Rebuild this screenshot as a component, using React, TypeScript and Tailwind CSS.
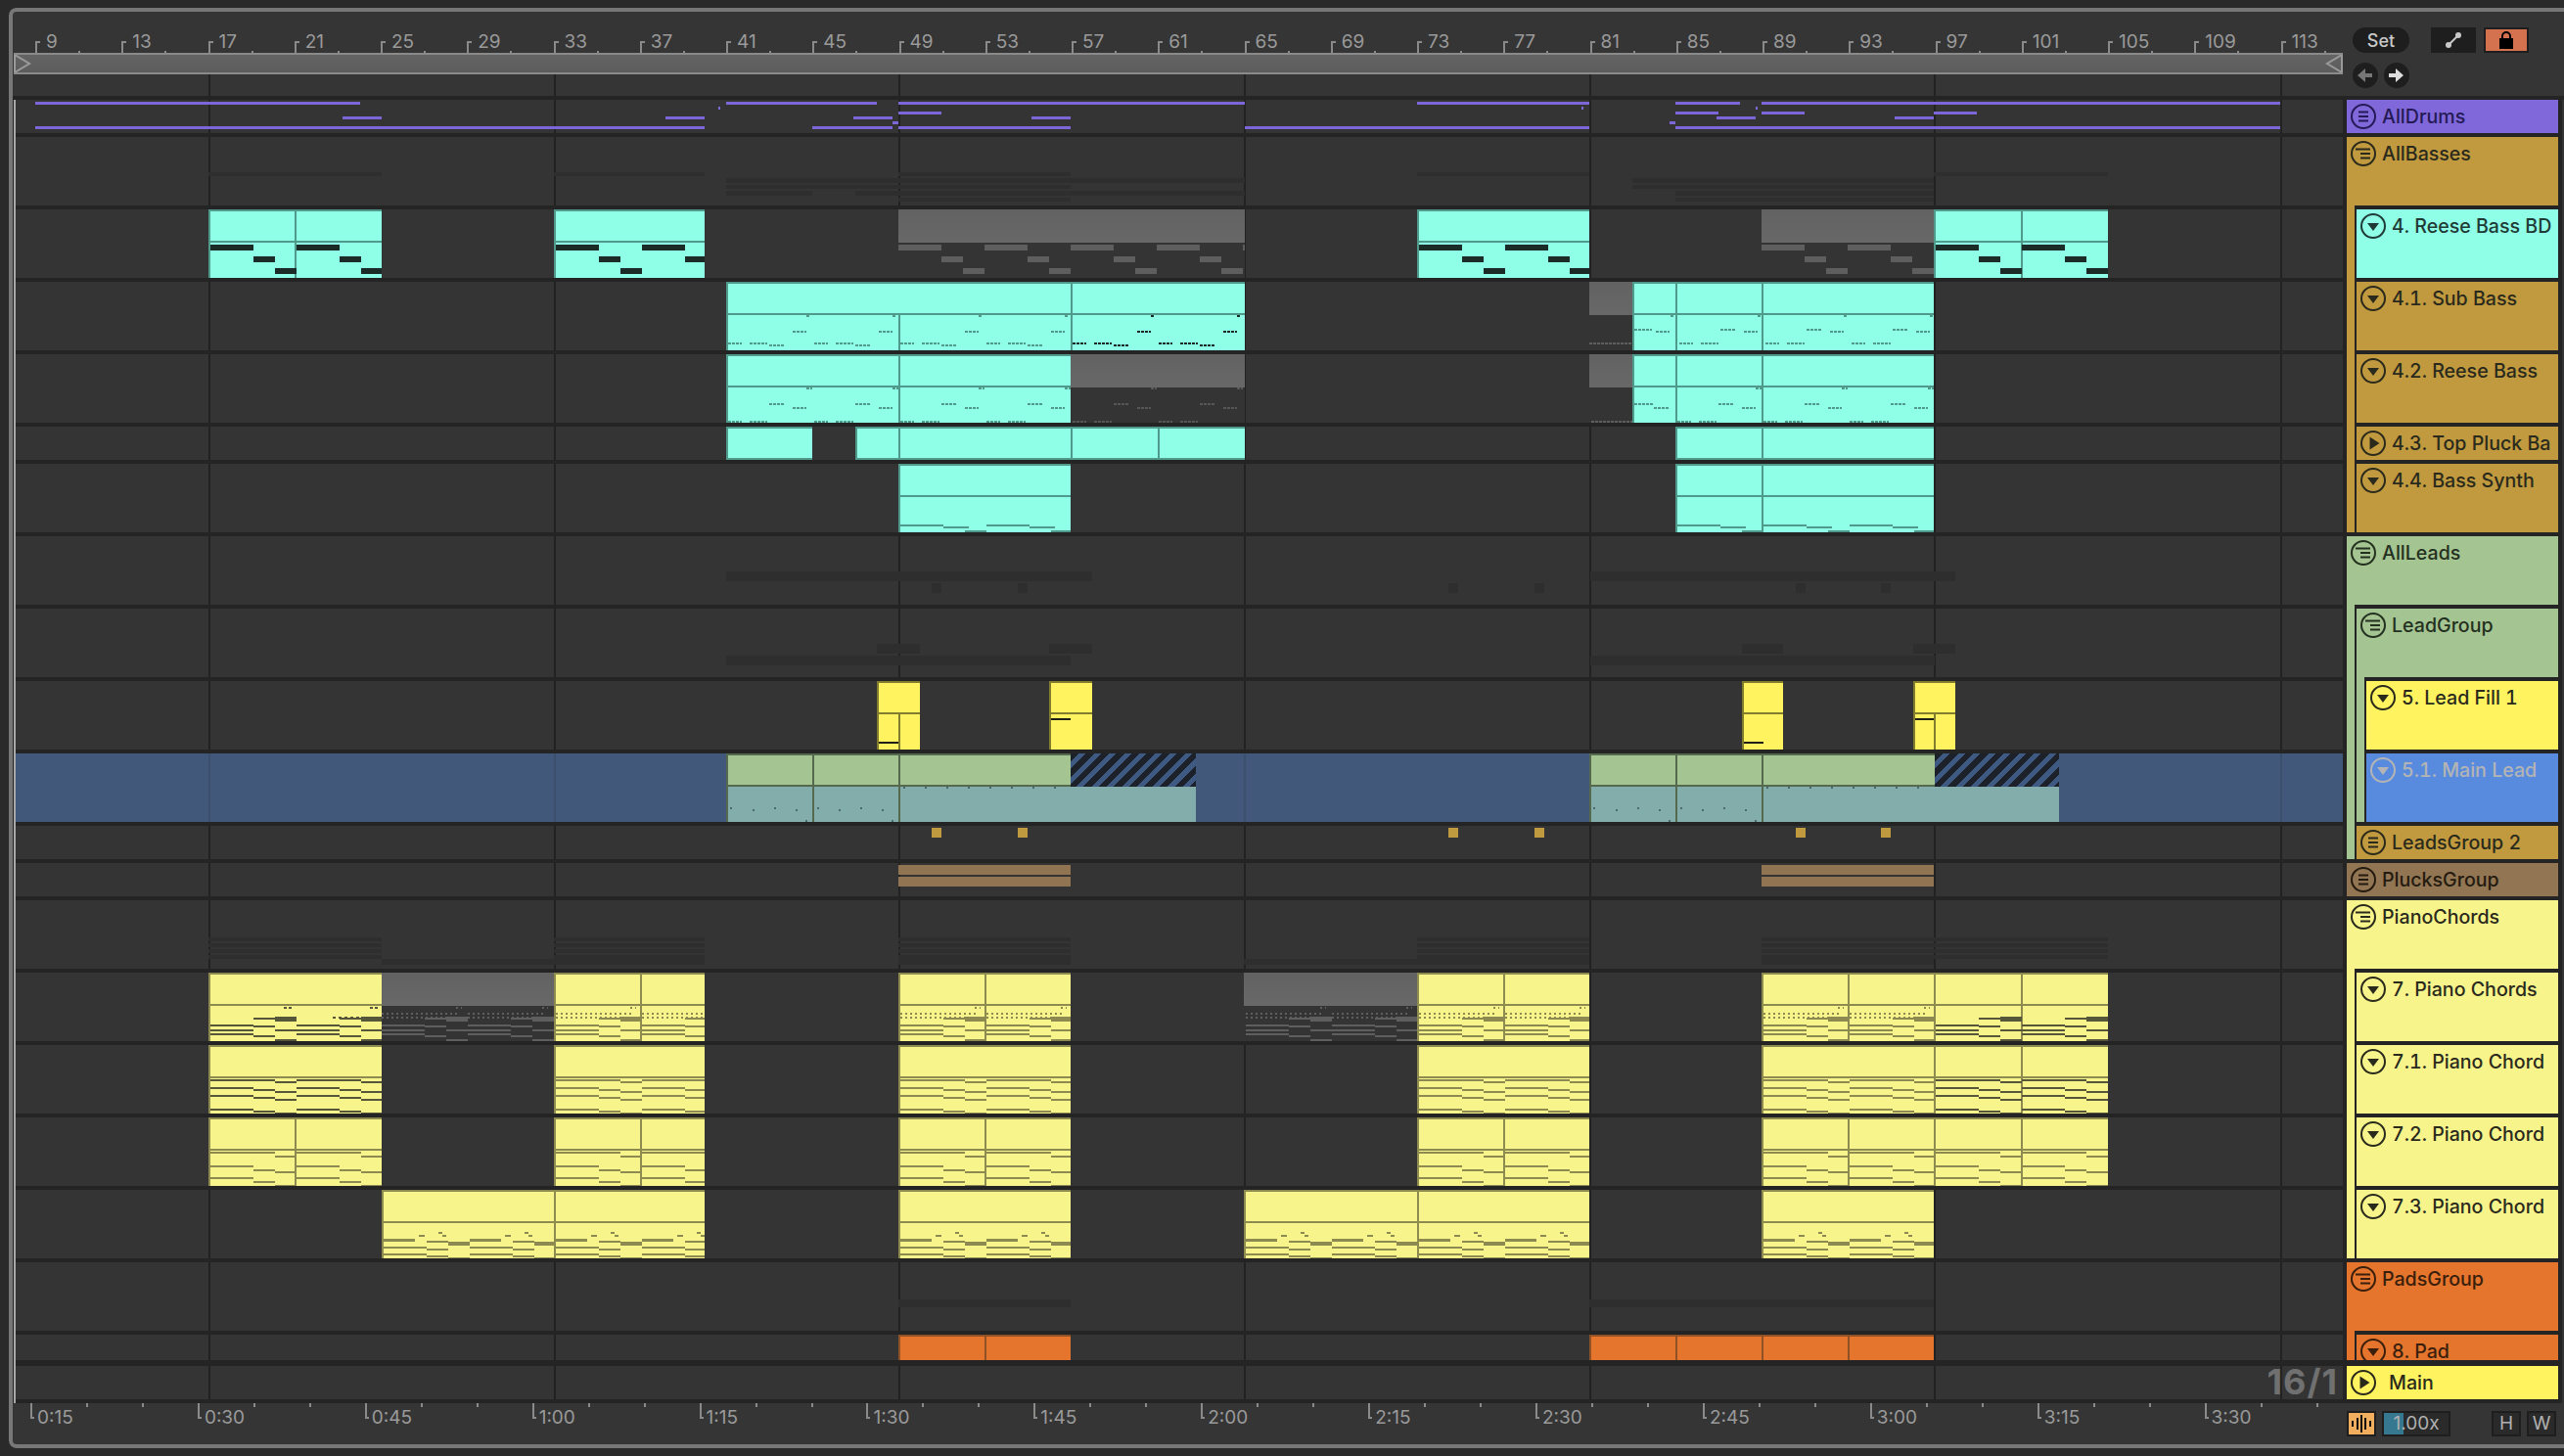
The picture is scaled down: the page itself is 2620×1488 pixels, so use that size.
import React from "react";

type N = { a: number; b: number; y: number; h: number; c: string; dash?: string };
type ClipT = { a: number; b: number; t: string; gray?: boolean; head?: string };
type LaneT = { top: number; h: number; clips?: ClipT[]; notes?: N[]; sel?: boolean; hatch?: [number, number][]; extra?: React.ReactNode };

const LX = 16;
const GRID = [213, 566, 918, 1271, 1624, 1976, 2330];

const R = (a: number, b: number, y: number, h: number, c: string, dash?: string): N => ({ a, b, y, h, c, dash });
const rep = (x0: number, x1: number, items: number[][], c: string, dash?: string, period = 88): N[] => {
  const out: N[] = [];
  for (let p = x0; p < x1; p += period) {
    for (const it of items) {
      const s = p + it[0];
      if (s < x1) out.push(R(s, Math.min(p + it[1], x1), it[2], it[3] ?? 2, c, dash));
    }
  }
  return out;
};

const CY = "cyan", YL = "yellow", BY = "bright", OR = "orange", LD = "lead";
const themes: Record<string, string> = {
  cyan: "bg-[#8fffe8] border-[#4f9a8b]",
  yellow: "bg-[#f8f48c] border-[#8e8b50]",
  bright: "bg-[#fff35f] border-[#827c2f]",
  orange: "bg-[#e5742d] border-[#8f5227]",
  lead: "bg-[#82adab] border-[#55694f]",
};
const c = (a: number, b: number, t: string): ClipT => ({ a, b, t });
const g = (a: number, b: number): ClipT => ({ a, b, t: "", gray: true });
const lead = (a: number, b: number): ClipT => ({ a, b, t: LD, head: "bg-[#a4c491]" });

const P = "#7d67d8";
const G = "#2e2e2e";
const CN = "#4f9a8b";
const CD = "#1a2b28";
const YN = "#8c8a50";
const YD = "#56563a";
const GN = "#5e5e5e";

const purple: N[] = [
  [36, 368, 104], [742, 896, 104], [918, 1272, 104], [1448, 1624, 104], [1712, 1778, 104], [1800, 2330, 104],
  [734, 736, 109], [1616, 1618, 109], [1794, 1796, 109],
  [918, 962, 114], [1712, 1756, 114], [1800, 1844, 114], [1976, 2020, 114],
  [350, 390, 119], [680, 720, 119], [872, 912, 119], [1054, 1094, 119], [1754, 1794, 119], [1936, 1976, 119],
  [912, 918, 124], [1706, 1712, 124],
  [36, 720, 129], [830, 912, 129], [918, 1094, 129], [1272, 1624, 129], [1712, 2330, 129],
].map(([a, b, y]) => R(a, b, y, 3, P));

const bassGhost: N[] = [
  [213, 390, 176, 4], [566, 720, 176, 4], [1448, 1624, 176, 4], [1976, 2154, 176, 4], [918, 1094, 176, 4],
  [742, 1272, 182, 5], [1668, 1976, 182, 5],
  [742, 1094, 189, 4], [1668, 1976, 189, 4],
  [742, 830, 195, 5], [874, 1272, 195, 5], [1712, 1976, 195, 5],
  [918, 1094, 202, 4], [1712, 1976, 202, 4],
].map(([a, b, y, h]) => R(a, b, y, h, G));

const reeseItems = [[0, 44, 250, 6], [44, 66, 262, 6], [66, 88, 274, 6]];
const sub1 = [[2, 16, 350], [24, 42, 350], [44, 60, 352], [68, 82, 338], [82, 86, 322]];
const sub2 = [[2, 16, 350], [24, 42, 350], [44, 60, 336], [68, 82, 338], [82, 86, 322]];
const sub3 = [[2, 16, 430], [24, 42, 430], [44, 60, 412], [68, 82, 416], [82, 88, 396]];
const syn = [[0, 44, 536], [44, 70, 538], [66, 88, 542, 3]];

const ch7 = [[0, 44, 1047], [0, 44, 1052], [0, 44, 1056], [44, 66, 1040], [44, 66, 1048], [44, 66, 1058], [66, 88, 1039, 5], [66, 88, 1052], [66, 88, 1062]];
const dots7 = [[0, 78, 1035], [0, 66, 1039], [76, 82, 1029]];
const ch71 = [[0, 44, 1103], [0, 44, 1111], [0, 44, 1119], [0, 44, 1133], [44, 66, 1103], [44, 66, 1113], [44, 66, 1121], [44, 66, 1135], [66, 88, 1105], [66, 88, 1115], [66, 88, 1123], [66, 88, 1137]];
const ch72 = [[0, 44, 1177], [0, 44, 1191], [0, 44, 1203], [44, 66, 1177], [44, 66, 1195], [44, 66, 1207], [66, 88, 1181], [66, 88, 1197], [66, 88, 1211]];
const ch73 = [[0, 32, 1266, 3], [0, 44, 1274], [0, 44, 1281], [44, 66, 1268], [44, 66, 1276], [44, 66, 1283], [66, 88, 1269, 4], [66, 88, 1285], [36, 42, 1262], [56, 60, 1259], [60, 64, 1262]];

const dotsLead = (o: number): N[] => [
  ...[[746, 825], [769, 827], [791, 825], [813, 827], [823, 838], [835, 825], [857, 827], [879, 825], [901, 827], [911, 838]].map(([x, y]) => R(x + o, x + o + 2, y, 2, "#4d6a6b")),
  ...[923, 945, 967, 989, 1011, 1033, 1055, 1077].map((x) => R(x + o, x + o + 2, 804, 2, "#4d6a6b")),
];

const ghostStripes = (a: number, b: number) => [958, 964, 970, 976].map((y) => R(a, b, y, 4, G));

const lanes: LaneT[] = [
  { top: 102, h: 34, notes: purple },
  { top: 140, h: 70, notes: bassGhost },
  {
    top: 214, h: 70,
    clips: [c(213, 301, CY), c(301, 390, CY), c(566, 720, CY), g(918, 1272), c(1448, 1624, CY), g(1800, 1976), c(1976, 2065, CY), c(2065, 2154, CY)],
    notes: [
      ...rep(215, 390, reeseItems, CD), ...rep(568, 720, reeseItems, CD), ...rep(1450, 1624, reeseItems, CD), ...rep(1978, 2154, reeseItems, CD),
      ...rep(918, 1272, reeseItems, GN), ...rep(1800, 1976, reeseItems, GN),
    ],
  },
  {
    top: 288, h: 70,
    clips: [c(742, 1094, CY), c(1094, 1272, CY), g(1624, 1668), c(1668, 1712, CY), c(1712, 1800, CY), c(1800, 1976, CY)],
    notes: [
      R(918, 920, 322, 36, CN),
      ...rep(742, 1094, sub1, CN, "3 1"), ...rep(1094, 1272, sub1, CD, "3 1"),
      R(1624, 1668, 350, 2, GN, "3 1"),
      R(1670, 1688, 336, 2, CN, "3 1"), R(1692, 1706, 338, 2, CN, "3 1"), R(1707, 1710, 322, 2, CN),
      ...rep(1714, 1976, sub2, CN, "3 1"),
    ],
  },
  {
    top: 362, h: 70,
    clips: [c(742, 918, CY), c(918, 1094, CY), g(1094, 1272), g(1624, 1668), c(1668, 1712, CY), c(1712, 1800, CY), c(1800, 1976, CY)],
    notes: [
      ...rep(742, 1094, sub3, CN, "3 1"), ...rep(1094, 1272, sub3, "#565656", "3 1"),
      R(1626, 1668, 430, 2, GN, "3 1"),
      R(1670, 1690, 412, 2, CN, "3 1"), R(1690, 1706, 416, 2, CN, "3 1"),
      ...rep(1712, 1976, sub3, CN, "3 1"),
    ],
  },
  {
    top: 436, h: 34,
    clips: [c(742, 830, CY), c(874, 918, CY), c(918, 1094, CY), c(1094, 1183, CY), c(1183, 1272, CY), c(1712, 1800, CY), c(1800, 1976, CY)],
  },
  {
    top: 474, h: 70,
    clips: [c(918, 1094, CY), c(1712, 1800, CY), c(1800, 1976, CY)],
    notes: [...rep(920, 1094, syn, CN), ...rep(1714, 1976, syn, CN)],
  },
  {
    top: 548, h: 70,
    notes: [R(742, 1116, 584, 10, G), R(1625, 1998, 584, 10, G), ...[952, 1040, 1480, 1568, 1835, 1922].map((x) => R(x, x + 10, 596, 10, G))],
  },
  {
    top: 622, h: 70,
    notes: [R(896, 940, 658, 10, G), R(1072, 1116, 658, 10, G), R(1780, 1822, 658, 10, G), R(1955, 1998, 658, 10, G), R(742, 1094, 670, 10, G), R(1625, 1977, 670, 10, G)],
  },
  {
    top: 696, h: 70,
    clips: [c(896, 940, BY), c(1072, 1116, BY), c(1780, 1822, BY), c(1955, 1998, BY)],
    notes: [
      R(918, 920, 730, 36, "#827c2f"), R(898, 918, 758, 2, "#1f1f1a"), R(1074, 1094, 734, 2, "#1f1f1a"),
      R(1976, 1978, 730, 36, "#827c2f"), R(1782, 1802, 758, 2, "#1f1f1a"), R(1957, 1976, 734, 2, "#1f1f1a"),
    ],
  },
  {
    top: 770, h: 70, sel: true,
    clips: [lead(742, 830), lead(830, 918), lead(918, 1222), lead(1624, 1712), lead(1712, 1800), lead(1800, 2104)],
    hatch: [[1094, 1222], [1977, 2104]],
    notes: [...dotsLead(0), ...dotsLead(882)],
  },
  {
    top: 844, h: 34,
    notes: [952, 1040, 1480, 1568, 1835, 1922].map((x) => R(x, x + 10, 846, 10, "#c09a3e")),
  },
  {
    top: 882, h: 34,
    notes: [R(918, 1094, 884, 10, "#917552"), R(918, 1094, 896, 10, "#917552"), R(1800, 1976, 884, 10, "#917552"), R(1800, 1976, 896, 10, "#917552")],
  },
  {
    top: 920, h: 70,
    notes: [
      ...ghostStripes(213, 390), ...ghostStripes(566, 720), ...ghostStripes(918, 1094), ...ghostStripes(1448, 1624), ...ghostStripes(1800, 2154),
      R(390, 720, 980, 6, G), R(918, 1094, 980, 6, G), R(1271, 1624, 980, 6, G), R(1800, 1976, 980, 6, G),
    ],
  },
  {
    top: 994, h: 70,
    clips: [c(213, 390, YL), g(390, 566), c(566, 654, YL), c(654, 720, YL), c(918, 1006, YL), c(1006, 1094, YL), g(1271, 1448), c(1448, 1536, YL), c(1536, 1624, YL), c(1800, 1888, YL), c(1888, 1976, YL), c(1976, 2065, YL), c(2065, 2154, YL)],
    notes: [
      ...rep(215, 390, ch7, YD), R(290, 298, 1029, 2, YD, "3 2"), R(378, 386, 1029, 2, YD, "3 2"), R(340, 372, 1039, 2, YD, "3 3"),
      ...rep(390, 566, ch7, GN), ...rep(390, 566, dots7, GN, "2 3"),
      ...rep(568, 720, ch7, YN), ...rep(568, 720, dots7, YN, "2 3"),
      ...rep(920, 1094, ch7, YN), ...rep(920, 1094, dots7, YN, "2 3"),
      ...rep(1273, 1448, ch7, GN), ...rep(1273, 1448, dots7, GN, "2 3"),
      ...rep(1450, 1624, ch7, YN), ...rep(1450, 1624, dots7, YN, "2 3"),
      ...rep(1802, 1976, ch7, YN), ...rep(1802, 1976, dots7, YN, "2 3"),
      ...rep(1978, 2154, ch7, YD),
    ],
  },
  {
    top: 1068, h: 70,
    clips: [c(213, 390, YL), c(566, 720, YL), c(918, 1094, YL), c(1448, 1624, YL), c(1800, 1976, YL), c(1976, 2065, YL), c(2065, 2154, YL)],
    notes: [...rep(215, 390, ch71, YD), ...rep(568, 720, ch71, YN), ...rep(920, 1094, ch71, YN), ...rep(1450, 1624, ch71, YN), ...rep(1802, 1976, ch71, YN), ...rep(1978, 2154, ch71, YD)],
  },
  {
    top: 1142, h: 70,
    clips: [c(213, 301, YL), c(301, 390, YL), c(566, 654, YL), c(654, 720, YL), c(918, 1006, YL), c(1006, 1094, YL), c(1448, 1536, YL), c(1536, 1624, YL), c(1800, 1888, YL), c(1888, 1976, YL), c(1976, 2065, YL), c(2065, 2154, YL)],
    notes: [...rep(215, 390, ch72, YN), ...rep(568, 720, ch72, YN), ...rep(920, 1094, ch72, YN), ...rep(1450, 1624, ch72, YN), ...rep(1802, 1976, ch72, YN), ...rep(1978, 2154, ch72, YN)],
  },
  {
    top: 1216, h: 70,
    clips: [c(390, 566, YL), c(566, 720, YL), c(918, 1094, YL), c(1271, 1448, YL), c(1448, 1624, YL), c(1800, 1976, YL)],
    notes: [...rep(392, 566, ch73, YN), ...rep(568, 720, ch73, YN), ...rep(920, 1094, ch73, YN), ...rep(1273, 1448, ch73, YN), ...rep(1450, 1624, ch73, YN), ...rep(1802, 1976, ch73, YN)],
  },
  { top: 1290, h: 70, notes: [R(918, 1094, 1328, 8, G), R(1624, 1976, 1328, 8, G)] },
  {
    top: 1364, h: 26,
    clips: [c(918, 1006, OR), c(1006, 1094, OR), c(1624, 1712, OR), c(1712, 1800, OR), c(1800, 1888, OR), c(1888, 1976, OR)],
  },
  { top: 1396, h: 34 },
];

function Lane({ l }: { l: LaneT }) {
  return (
    <div
      className={`relative shrink-0 overflow-hidden ${l.sel ? "bg-[#42587a]" : "bg-[#343434]"}`}
      style={{ height: l.h }}
    >
      {GRID.map((x) => (
        <div
          key={x}
          className={`absolute top-0 bottom-0 w-[2px] ${l.sel ? "bg-[#3c506e]" : "bg-[#222222]"}`}
          style={{ left: x - LX }}
        />
      ))}
      {l.clips?.map((k, i) =>
        k.gray ? (
          <div key={i} className="absolute top-0 bottom-0 bg-[#343434]" style={{ left: k.a - LX, width: k.b - k.a }}>
            <div className="h-[34px] bg-gradient-to-b from-[#626262] to-[#686868]" />
          </div>
        ) : (
          <div
            key={i}
            className={`absolute top-0 bottom-0 border-l-2 border-t-2 ${themes[k.t]}`}
            style={{ left: k.a - LX, width: k.b - k.a }}
          >
            <div className={`h-[32px] border-b-2 border-inherit ${k.head ?? ""}`} />
          </div>
        )
      )}
      {l.hatch?.map(([a, b]) => (
        <div
          key={a}
          className="absolute top-0 h-[34px] bg-[repeating-linear-gradient(135deg,#1d2129_0px,#1d2129_6px,#3f5a82_6px,#3f5a82_11px)]"
          style={{ left: a - LX, width: b - a }}
        />
      ))}
      {l.notes && (
        <svg
          className="absolute inset-0 w-full h-full"
          viewBox={`${LX} ${l.top} 2378 ${l.h}`}
          preserveAspectRatio="none"
          shapeRendering="crispEdges"
        >
          {l.notes.map((n, i) =>
            n.dash ? (
              <line key={i} x1={n.a} x2={n.b} y1={n.y + n.h / 2} y2={n.y + n.h / 2} stroke={n.c} strokeWidth={n.h} strokeDasharray={n.dash} />
            ) : (
              <rect key={i} x={n.a} y={n.y} width={n.b - n.a} height={n.h} fill={n.c} />
            )
          )}
        </svg>
      )}
      {l.extra}
    </div>
  );
}

type IconK = "closed" | "open" | "down" | "play";
function TrackIcon({ k }: { k: IconK }) {
  return (
    <svg width="26" height="26" viewBox="0 0 26 26" className="shrink-0" fill="currentColor" stroke="currentColor">
      <circle cx="13" cy="13" r="12" fill="none" strokeWidth="2" />
      {k === "closed" && (
        <g strokeWidth="2">
          <line x1="8" x2="18" y1="8.5" y2="8.5" />
          <line x1="8" x2="18" y1="13" y2="13" />
          <line x1="8" x2="18" y1="17.5" y2="17.5" />
        </g>
      )}
      {k === "open" && (
        <g strokeWidth="2">
          <line x1="5" x2="20" y1="8.5" y2="8.5" />
          <line x1="10" x2="20" y1="13" y2="13" />
          <line x1="10" x2="20" y1="17.5" y2="17.5" />
        </g>
      )}
      {k === "down" && <polygon points="7,10 19,10 13,18" stroke="none" />}
      {k === "play" && <polygon points="9.5,6.5 9.5,19.5 19.5,13" stroke="none" />}
    </svg>
  );
}

function Head({ k, title, h, bg, text, wide }: { k: IconK; title: string; h: number; bg: string; text: string; wide?: boolean }) {
  return (
    <div className={`shrink-0 overflow-hidden ${bg} ${text}`} style={{ height: h }}>
      <div className="flex items-start pt-[4px] pl-[4px]">
        <TrackIcon k={k} />
        <span className={`${wide ? "ml-[13px]" : "ml-[6px]"} h-[26px] leading-[27px] text-[19.6px] font-medium tabular-nums whitespace-nowrap`}>
          {title}
        </span>
      </div>
    </div>
  );
}

function Group({ bg, children }: { bg: string; children: React.ReactNode }) {
  return (
    <div className={`${bg} pl-[8px]`}>
      <div className="bg-[#242424] pl-[2px] pt-[4px] flex flex-col gap-[4px]">{children}</div>
    </div>
  );
}

const TXT = "text-[#2a2a1c]";

const labelsTop = Array.from({ length: 27 }, (_, i) => 9 + i * 4);
const labelsBottom = ["0:15", "0:30", "0:45", "1:00", "1:15", "1:30", "1:45", "2:00", "2:15", "2:30", "2:45", "3:00", "3:15", "3:30"];

export default function App() {
  return (
    <div className="w-[2620px] h-[1488px] bg-[#2a2a2a] pt-[8px] pl-[9px] overflow-hidden font-['Inter','Liberation_Sans',sans-serif]">
      <div className="w-[2611px] h-[1472px] border-[4px] border-r-0 border-[#777777] rounded-l-[8px] bg-[#353535] flex flex-col">
        {/* top */}
        <div className="h-[86px] shrink-0 flex">
          <div className="w-[2381px] shrink-0 flex flex-col">
            <div className="h-[42px] flex items-end pl-[23px] text-[#9a9a9a]">
              {labelsTop.map((b) => (
                <div key={b} className="relative w-[88.25px] h-[42px] shrink-0">
                  <div className="absolute left-0 bottom-0 w-[2px] h-[12px] bg-[#8a8a8a]" />
                  <div className="absolute left-0 bottom-[10px] w-[5px] h-[2px] bg-[#8a8a8a]" />
                  <div className="absolute left-[44px] bottom-0 w-[2px] h-[2px] bg-[#8a8a8a]" />
                  <span className="absolute left-[11px] top-[21px] text-[19px] leading-[20px]">{b}</span>
                </div>
              ))}
            </div>
            <div className="relative h-[22px] border-y-2 border-[#8a8a8a] bg-gradient-to-b from-[#646464] to-[#5c5c5c] ml-[1px]">
              <svg className="absolute left-0 top-0" width="18" height="18" viewBox="0 0 18 18">
                <polygon points="1,0 1,18 16,9" fill="none" stroke="#9a9a9a" strokeWidth="2" />
              </svg>
              <svg className="absolute right-0 top-0" width="18" height="18" viewBox="0 0 18 18">
                <polygon points="17,0 17,18 2,9" fill="none" stroke="#9a9a9a" strokeWidth="2" />
              </svg>
            </div>
            <div className="relative h-[22px]">
              {GRID.map((x) => (
                <div key={x} className="absolute top-0 bottom-0 w-[2px] bg-[#222222]" style={{ left: x - 13 }} />
              ))}
            </div>
          </div>
          <div className="pl-[10px] pt-[16px] flex flex-col gap-[10px]">
            <div className="flex items-center">
              <div className="w-[58px] h-[26px] rounded-full bg-[#1e1e1e] text-[#c8c8c8] text-[18px] font-medium flex items-center justify-center">Set</div>
              <div className="ml-[22px] w-[46px] h-[26px] bg-[#1e1e1e] flex items-center justify-center">
                <svg width="18" height="18" viewBox="0 0 18 18" fill="#c8c8c8" stroke="#c8c8c8">
                  <circle cx="14" cy="4" r="3" stroke="none" />
                  <circle cx="4" cy="14" r="3" stroke="none" />
                  <line x1="4" y1="14" x2="14" y2="4" strokeWidth="2" />
                </svg>
              </div>
              <div className="ml-[8px] w-[46px] h-[26px] bg-[#d4714f] border-2 border-[#1e1e1e] flex items-center justify-center">
                <svg width="16" height="18" viewBox="0 0 16 18">
                  <path d="M4 8V5a4 4 0 0 1 8 0v3" fill="none" stroke="#000" strokeWidth="2" />
                  <rect x="1" y="7" width="14" height="11" fill="#000" />
                </svg>
              </div>
            </div>
            <div className="flex gap-[6px]">
              <div className="w-[26px] h-[26px] rounded-full bg-[#1e1e1e] flex items-center justify-center">
                <svg width="16" height="14" viewBox="0 0 16 14" fill="#777777">
                  <polygon points="0,7 8,0 8,5 15,5 15,9 8,9 8,14" />
                </svg>
              </div>
              <div className="w-[26px] h-[26px] rounded-full bg-[#1e1e1e] flex items-center justify-center">
                <svg width="16" height="14" viewBox="0 0 16 14" fill="#dddddd">
                  <polygon points="15,7 7,0 7,5 0,5 0,9 7,9 7,14" />
                </svg>
              </div>
            </div>
          </div>
        </div>

        {/* body */}
        <div className="h-[1336px] shrink-0 bg-[#242424] pt-[4px] flex">
          <div className="w-[1px] shrink-0" />
          <div className="w-[2380px] shrink-0 border-l-2 border-[#a8a8a8] flex flex-col gap-[4px] relative">
            {lanes.map((l, i) => (
              <div key={l.top} className={i === lanes.length - 1 ? "mt-[2px] relative" : "relative"}>
                <Lane l={l} />
                {i === lanes.length - 1 && (
                  <span className="absolute right-[5px] top-[-3px] text-[36px] leading-[38px] font-bold tracking-[1px] text-[#707070]">16/1</span>
                )}
              </div>
            ))}
          </div>
          <div className="w-[4px] shrink-0" />
          <div className="w-[216px] shrink-0 flex flex-col gap-[4px]">
            <Head k="closed" title="AllDrums" h={34} bg="bg-[#8068db]" text="text-[#251a55]" />
            <div>
              <Head k="open" title="AllBasses" h={70} bg="bg-[#c19a3f]" text={TXT} />
              <Group bg="bg-[#c19a3f]">
                <Head k="down" title="4. Reese Bass BD" h={70} bg="bg-[#8fffe8]" text="text-[#1f3a35]" />
                <Head k="down" title="4.1. Sub Bass" h={70} bg="bg-[#c19a3f]" text={TXT} />
                <Head k="down" title="4.2. Reese Bass" h={70} bg="bg-[#c19a3f]" text={TXT} />
                <Head k="play" title="4.3. Top Pluck Ba" h={34} bg="bg-[#c19a3f]" text={TXT} />
                <Head k="down" title="4.4. Bass Synth" h={70} bg="bg-[#c19a3f]" text={TXT} />
              </Group>
            </div>
            <div>
              <Head k="open" title="AllLeads" h={70} bg="bg-[#a4c491]" text="text-[#24301f]" />
              <Group bg="bg-[#a4c491]">
                <div>
                  <Head k="open" title="LeadGroup" h={70} bg="bg-[#a4c491]" text="text-[#24301f]" />
                  <Group bg="bg-[#a4c491]">
                    <Head k="down" title="5. Lead Fill 1" h={70} bg="bg-[#fff35f]" text={TXT} />
                    <Head k="down" title="5.1. Main Lead" h={70} bg="bg-[#588bde]" text="text-[#b4b4b4]" />
                  </Group>
                </div>
                <Head k="closed" title="LeadsGroup 2" h={34} bg="bg-[#c19a3f]" text={TXT} />
              </Group>
            </div>
            <Head k="closed" title="PlucksGroup" h={34} bg="bg-[#927552]" text="text-[#241b10]" />
            <div>
              <Head k="open" title="PianoChords" h={70} bg="bg-[#f8f48c]" text={TXT} />
              <Group bg="bg-[#f8f48c]">
                <Head k="down" title="7. Piano Chords" h={70} bg="bg-[#f8f48c]" text={TXT} />
                <Head k="down" title="7.1. Piano Chord" h={70} bg="bg-[#f8f48c]" text={TXT} />
                <Head k="down" title="7.2. Piano Chord" h={70} bg="bg-[#f8f48c]" text={TXT} />
                <Head k="down" title="7.3. Piano Chord" h={70} bg="bg-[#f8f48c]" text={TXT} />
              </Group>
            </div>
            <div className="h-[100px] overflow-hidden">
              <Head k="open" title="PadsGroup" h={70} bg="bg-[#e5742d]" text="text-[#3a1f0c]" />
              <Group bg="bg-[#e5742d]">
                <Head k="down" title="8. Pad" h={70} bg="bg-[#e5742d]" text="text-[#3a1f0c]" />
              </Group>
            </div>
            <div className="mt-[2px]">
              <Head k="play" title="Main" h={34} bg="bg-[#fff35f]" text={TXT} wide />
            </div>
          </div>
          <div className="flex-1 flex">
            <div className="w-[4px] shrink-0" />
            <div className="flex-1 bg-[#333333]" />
          </div>
        </div>

        {/* bottom */}
        <div className="h-[42px] shrink-0 flex">
          <div className="w-[2381px] shrink-0 flex pl-[18px] text-[#9a9a9a]">
            {labelsBottom.map((t) => (
              <div key={t} className="relative w-[170.9px] shrink-0 h-[42px]">
                <div className="absolute left-0 top-0 w-[2px] h-[16px] bg-[#8a8a8a]" />
                <div className="absolute left-0 top-[14px] w-[4px] h-[2px] bg-[#8a8a8a]" />
                <div className="absolute left-[57px] top-0 w-[2px] h-[4px] bg-[#8a8a8a]" />
                <div className="absolute left-[114px] top-0 w-[2px] h-[4px] bg-[#8a8a8a]" />
                <span className="absolute left-[7px] top-[3px] text-[19px] leading-[24px]">{t}</span>
              </div>
            ))}
          </div>
          <div className="pl-[4px] pt-[8px] flex items-start">
            <div className="w-[30px] h-[26px] bg-[#f0ae5e] border-2 border-[#1e1e1e] flex items-center justify-center">
              <svg width="22" height="18" viewBox="0 0 22 18" stroke="#111" strokeWidth="2">
                <line x1="2" x2="2" y1="6" y2="12" />
                <line x1="7" x2="7" y1="3" y2="15" />
                <line x1="11" x2="11" y1="0" y2="18" />
                <line x1="15" x2="15" y1="3" y2="15" />
                <line x1="20" x2="20" y1="6" y2="12" />
              </svg>
            </div>
            <div className="relative ml-[6px] w-[70px] h-[26px] bg-[#2a2a2a] border-2 border-[#1e1e1e] text-[#b0b0b0] text-[19px] leading-[22px] flex justify-center">
              <div className="absolute left-0 top-0 bottom-0 w-[20px] bg-[#35788f]" />
              <span className="relative">1.00x</span>
            </div>
            <div className="ml-[42px] w-[30px] h-[26px] bg-[#2a2a2a] border-2 border-[#1e1e1e] text-[#b0b0b0] text-[19px] leading-[22px] text-center">H</div>
            <div className="ml-[6px] w-[30px] h-[26px] bg-[#2a2a2a] border-2 border-[#1e1e1e] text-[#b0b0b0] text-[19px] leading-[22px] text-center">W</div>
          </div>
        </div>
      </div>
    </div>
  );
}
